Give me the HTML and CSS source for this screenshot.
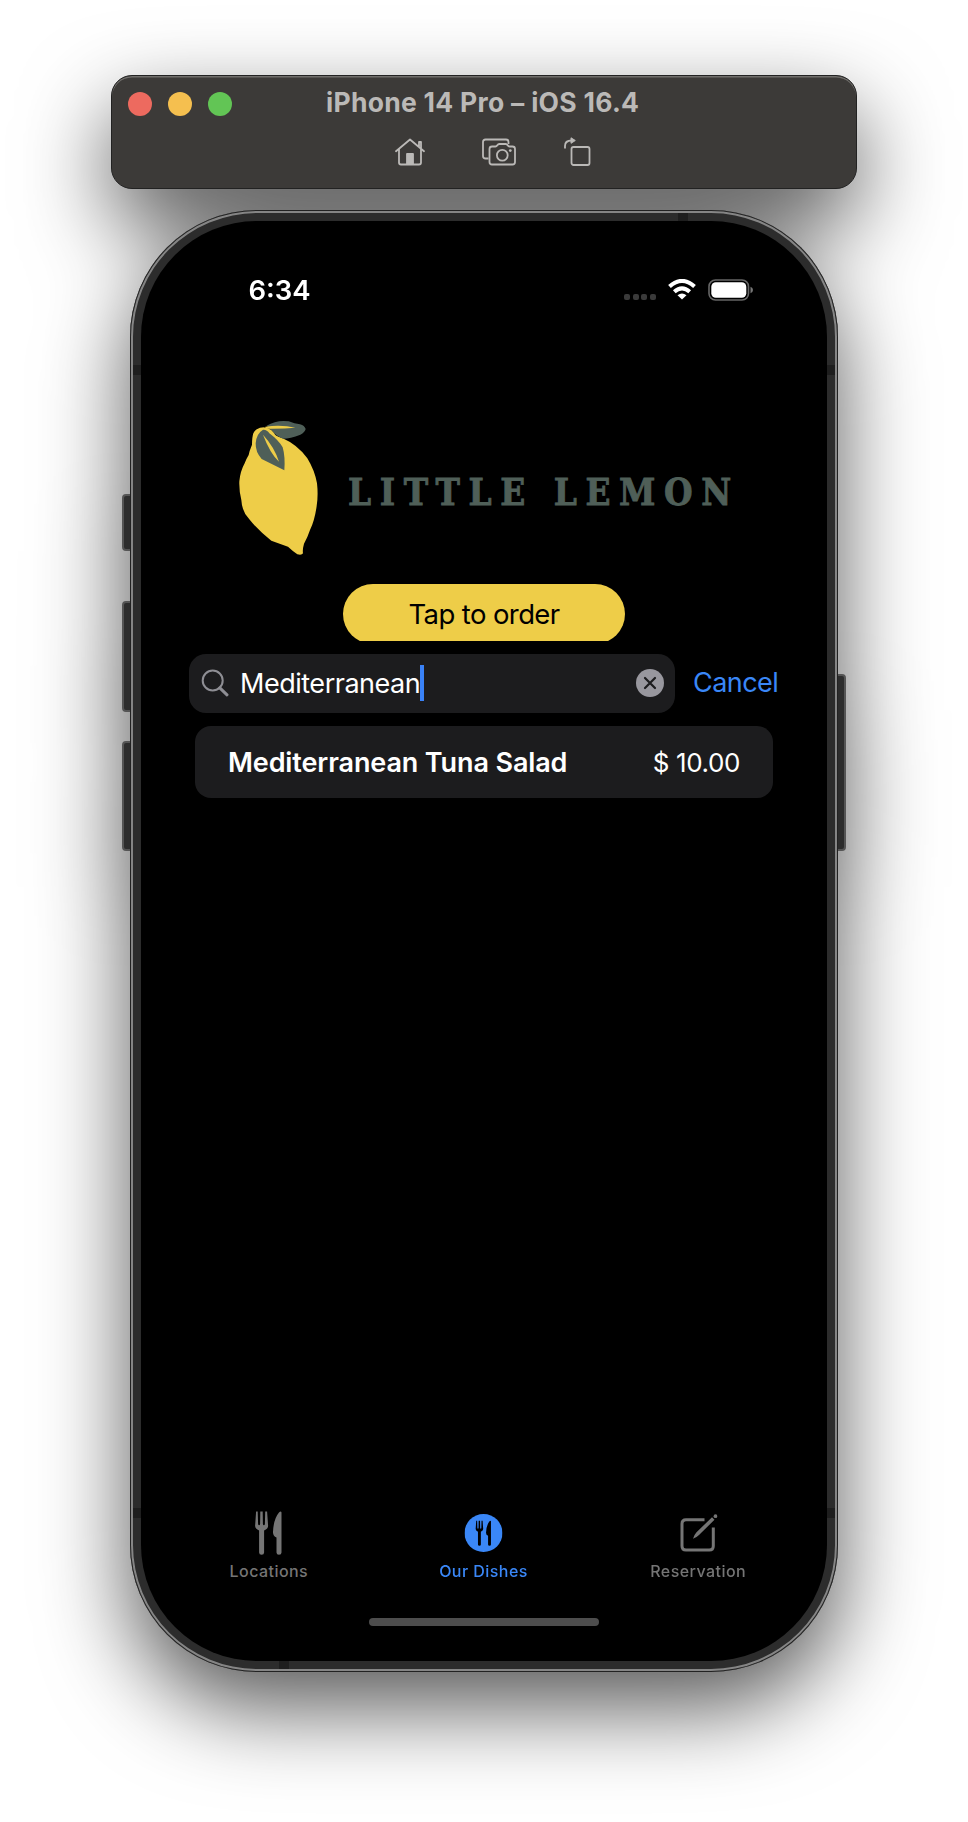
FILE: index.html
```html
<!DOCTYPE html>
<html lang="en">
<head>
<meta charset="utf-8">
<title>Little Lemon</title>
<link rel="stylesheet" href="styles.css">
</head>
<body>
<div class="simulator">
  <header class="titlebar">
    <div class="title-row">
      <div class="lights"><i class="light red"></i><i class="light amber"></i><i class="light green"></i></div>
      <div class="title">iPhone 14 Pro – iOS 16.4</div>
    </div>
    <div class="tools">
      <svg class="tool-home" width="30" height="28" viewBox="0 0 30 28" fill="none" stroke="#bbb9b7" stroke-width="1.8" stroke-linejoin="round" stroke-linecap="round"><path d="M1 13.2 15 1.5l14 11.7M4 11v13.5q0 2 2 2h18q2 0 2-2V11M24 9V4h2v6.5"/><path d="M12 16h6v10h-6z" fill="#bbb9b7"/></svg>
      <svg class="tool-camera" width="34" height="28" viewBox="0 0 34 28" fill="none" stroke="#bbb9b7" stroke-width="1.8" stroke-linejoin="round"><path d="M6.5 20.5H3.5q-2.5 0-2.500-2.500V4q0-2.500 2.500-2.500H24q2.500 0 2.500 2.500V6"/><path d="M10 8.500h3.500q1 0 1.800-1.200t2-1.300h6.400q1.200 0 2 1.300t1.800 1.200H30.500q2.500 0 2.500 2.500v13q0 2.500-2.500 2.500H10q-2.500 0-2.500-2.500V11q0-2.500 2.500-2.500z"/><circle cx="20.300" cy="17.300" r="5.400"/><circle cx="28.300" cy="12.600" r="1.400" fill="#bbb9b7" stroke="none"/></svg>
      <svg class="tool-rotate" width="27" height="29" viewBox="0 0 27 29" fill="none" stroke="#bbb9b7" stroke-width="1.800" stroke-linejoin="round"><rect x="7.500" y="10" width="18" height="18" rx="2"/><path d="M1 11.500V9q0-5.500 6.500-5.500"/><path d="M7 .8 11.300 3.500 7 6.300z" fill="#bbb9b7" stroke-width="1"/></svg>
    </div>
  </header>

  <main class="phone">
    <i class="key mute"></i><i class="key vol-up"></i><i class="key vol-down"></i><i class="key power"></i>
    <i class="band band-top"></i><i class="band band-bottom"></i>
    <i class="band band-lt"></i><i class="band band-rt"></i><i class="band band-lb"></i><i class="band band-rb"></i>
    <div class="screen">
      <div class="status">
        <span class="time">6:34</span>
        <div class="status-icons">
          <div class="dots"><i></i><i></i><i></i><i></i></div>
          <svg class="wifi" width="28" height="22" viewBox="0 0 28 22" fill="none" stroke="#fff" stroke-width="4"><path d="M1.500 7.600Q14-3.800 26.500 7.600"/><path d="M6.300 12.800q7.700-7 15.400 0"/><path d="M14 20.500 9.500 16.200q4.500-3.600 9 0z" fill="#fff" stroke="none"/></svg>
          <svg class="battery" width="45" height="22" viewBox="0 0 45 22"><rect x="1" y="1" width="39.500" height="20" rx="6.500" fill="none" stroke="#666" stroke-width="1.600"/><rect x="3.300" y="3.300" width="35" height="15.500" rx="4.500" fill="#fff"/><path d="M42.500 7.800q2.500 1 2.500 3.200t-2.500 3.200z" fill="#777"/></svg>
        </div>
      </div>

      <div class="brand">
        <svg class="lemon" width="80" height="136" viewBox="54 60 240 408"><path fill="#eecd48" d="M100 100q4-12 20-17 18-3 32 12 8 10 36 20 44 19 74 60 22 36 29 75 4 36-1 68-6 44-20 72-8 24-18 41-5 18-3 29-3 6-17 3-14-10-28-23-28-10-50-18Q112 389 88 358 66 336 64 300q-7-28-6-56 3-31 16-54 4-12 12-25 2-12 10-31 0-22 4-34z"/><path fill="#4f5f58" d="M140 77q30-18 66-13 18 7 34 9 14 4 17 14-2 10-16 17-30 12-52 12-20-7-32-22z"/><path d="M128 86q24-3 40 29" fill="none" stroke="#eecd48" stroke-width="7"/><path fill="#4f5f58" d="M129 89q-20 12-22 41-1 26 18 47l68 34q3-42-5-69-13-22-40-42-7-12-19-11z"/><path d="M136 80q50-6 90 3-38 4-90 3zM129 104q34 37 48 81-27-25-48-81z" fill="#eecd48"/></svg>
        <h1 class="wordmark">LITTLE LEMON</h1>
      </div>

      <div class="order-clip"><button class="order">Tap to order</button></div>

      <div class="search-row">
        <div class="search">
          <svg class="magnifier" width="28" height="28" viewBox="0 0 28 28" fill="none" stroke="#8e8e94"><circle cx="11.700" cy="11.500" r="10" stroke-width="2"/><path d="m18.800 18.800 7.200 7" stroke-width="3" stroke-linecap="round"/></svg>
          <span class="query">Mediterranean</span><i class="caret"></i>
          <svg class="clear" width="28" height="28" viewBox="0 0 28 28"><circle cx="14" cy="14" r="14" fill="#98979e"/><path d="m9 9 10 10M19 9 9 19" stroke="#1c1c1e" stroke-width="2.200" stroke-linecap="round"/></svg>
        </div>
        <a class="cancel">Cancel</a>
      </div>

      <div class="dish"><b class="dish-name">Mediterranean Tuna Salad</b><span class="price">$ 10.00</span></div>

      <nav class="tabs">
        <div class="tab">
          <div class="tab-icon"><svg width="28" height="44" viewBox="0 0 28 44" fill="#757575"><use href="#cutlery"/></svg></div>
          <span class="tab-label loc">Locations</span>
        </div>
        <div class="tab active">
          <div class="tab-icon"><svg width="38" height="38" viewBox="0 0 38 38"><circle cx="19" cy="19" r="19" fill="#3a87f7"/><g transform="translate(10.800 6.500) scale(.58)" fill="#000"><g id="cutlery"><path d="M1.600.6h1.600l.4 12.500q.2 1.200 1 1.200t1-1.200L5.800.6h2.400l.2 12.500q.2 1.200 1 1.200t1-1.200L10.700.6h1.900l1 14.200q0 3.200-4 4.600v22q0 2.300-2.500 2.300t-2.500-2.300v-22q-4-1.400-4-4.600z"/><path d="M27 1.500v40q0 2.200-2.500 2.200T22 41.500V26.500q-3.600-1.500-3.500-5.500Q19 8 24.500 1.500q2-1.800 2.500 0z"/></g></g></svg></div>
          <span class="tab-label dishes">Our Dishes</span>
        </div>
        <div class="tab">
          <div class="tab-icon"><svg width="38" height="38" viewBox="0 0 38 38" fill="none" stroke="#757575" stroke-width="3"><path d="M25 5.700H6.500q-4 0-4 4V32q0 4 4 4h23.300q4 0 4-4V13.500"/><path d="m32.500 3.300 2.500 2.500L19.500 21q-2 2-6 3.800 1.500-4.500 3.500-6.500z" fill="#757575" stroke="none"/><circle cx="36" cy="2.200" r="1.900" fill="#757575" stroke="none"/></svg></div>
          <span class="tab-label res">Reservation</span>
        </div>
      </nav>
      <div class="home-indicator"></div>
    </div>
  </main>
</div>
</body>
</html>
```
FILE: styles.css
```css
* { box-sizing: border-box; }
body { margin: 0; background: #fff; font-family: Inter, "Liberation Sans", sans-serif; overflow: hidden; }

.simulator {
  width: 968px; height: 1822px; padding-top: 75px;
  display: flex; flex-direction: column; align-items: center; gap: 21px;
  filter: drop-shadow(0 36px 44px rgba(0,0,0,.65));
}

.titlebar {
  width: 746px; height: 114px; background: #3c3a38; border-radius: 21px;
  border: 1px solid #222; box-shadow: inset 0 1.500px 0 #706e6b;
}
.title-row { display: flex; align-items: center; height: 54px; padding-left: 16px; }
.lights { display: flex; gap: 16px; width: 198px; margin-top: 2px; }
.light { width: 24px; height: 24px; border-radius: 50%; }
.red { background: #ed6a5f; }
.amber { background: #f5bf4f; }
.green { background: #62c555; }
.title { margin-top: -2px; font-size: 26.500px; font-weight: 700; line-height: 54px; letter-spacing: .28px; color: #bbb9b7; white-space: nowrap; }
.tools { display: flex; align-items: flex-start; padding: 8px 0 0 283px; }
.tool-camera { margin-left: 57px; }
.tool-rotate { margin-left: 48px; margin-top: -1px; }

.phone {
  position: relative; width: 708px; height: 1462px; border-radius: 127px;
  background: #2c2c2c; padding: 11px;
  box-shadow: inset 0 0 0 1px #222, inset 0 0 0 3px #858585;
}
.screen {
  height: 1440px; border-radius: 116px; background: #000; color: #fff; overflow: hidden;
  display: flex; flex-direction: column; align-items: center;
}
.key { position: absolute; z-index: -1; left: -8px; width: 12px; background: #2d2d2d; border: 2px solid #555; border-radius: 4px; }
.mute { top: 284px; height: 57px; }
.vol-up { top: 391px; height: 111px; }
.vol-down { top: 531px; height: 110px; }
.power { left: auto; right: -8px; top: 464px; height: 177px; }
.band { position: absolute; background: #1e1e1e; }
.band-top { left: 548px; top: 3px; width: 10px; height: 8px; }
.band-bottom { left: 149px; bottom: 3px; width: 10px; height: 8px; }
.band-lt, .band-rt { top: 155px; width: 8px; height: 10px; }
.band-lb, .band-rb { top: 1298px; width: 8px; height: 10px; }
.band-lt, .band-lb { left: 3px; }
.band-rt, .band-rb { right: 3px; }

.status { width: 100%; display: flex; justify-content: space-between; align-items: center; height: 38px; margin-top: 50px; padding: 0 74px 0 107.500px; }
.time { font-size: 27.500px; font-weight: 600; line-height: 38px; }
.status-icons { display: flex; align-items: center; }
.dots { display: flex; gap: 2.700px; margin: 14px 12px 0 0; }
.dots i { width: 6px; height: 6px; border-radius: 2px; background: #3a3a3a; }
.battery { margin-left: 12px; }

.brand { width: 100%; display: flex; align-items: center; height: 136px; margin-top: 111px; padding-left: 97px; }
.lemon { flex: none; }
.wordmark { margin: 8px 0 0 30px; font: bold 36.500px "DejaVu Serif Condensed", "DejaVu Serif", serif; font-stretch: condensed; letter-spacing: 8.600px; color: #4f5f58; -webkit-text-stroke: .8px #4f5f58; white-space: nowrap; }

.order-clip { height: 56.500px; margin-top: 28px; overflow: hidden; }
.order { display: block; width: 282px; height: 60px; padding: 0; border: 0; border-radius: 30px; background: #eecd48; color: #000; font: 400 27.500px/60px Inter, sans-serif; letter-spacing: -.6px; }

.search-row { width: 100%; display: flex; align-items: center; margin-top: 13px; padding-left: 47.500px; }
.search { width: 486px; height: 59px; display: flex; align-items: center; padding: 0 11px 0 12px; border-radius: 17px; background: #1c1c1e; }
.query { margin-left: 11.500px; padding-top: 1px; font-size: 27px; line-height: 58px; letter-spacing: -.48px; }
.caret { flex: none; width: 3.500px; height: 36px; background: #3a82f7; }
.clear { margin-left: auto; }
.cancel { margin: -1px 0 0 18.500px; font-size: 27px; letter-spacing: -.55px; color: #3a87f7; }

.dish { width: 578px; height: 72px; margin-top: 13.500px; padding: 0 33px; border-radius: 16px; background: #1c1c1e; display: flex; align-items: center; justify-content: space-between; }
.dish-name { font-size: 27px; font-weight: 600; letter-spacing: -.12px; white-space: nowrap; }
.price { font-size: 26px; letter-spacing: -.4px; white-space: nowrap; }

.tabs { display: flex; width: 644px; margin-top: auto; transform: translateX(-.5px); }
.tab { flex: 1; display: flex; flex-direction: column; align-items: center; color: #757575; }
.tab-icon { height: 44px; display: flex; align-items: center; }
.tab-label { margin-top: 5px; margin-bottom: 1px; font-size: 16px; font-weight: 500; line-height: 22px; letter-spacing: .45px; white-space: nowrap; }
.active { color: #3a87f7; }
.home-indicator { width: 230px; height: 8.500px; margin: 35px 0 35px; border-radius: 5px; background: #4d4d4d; }
```
